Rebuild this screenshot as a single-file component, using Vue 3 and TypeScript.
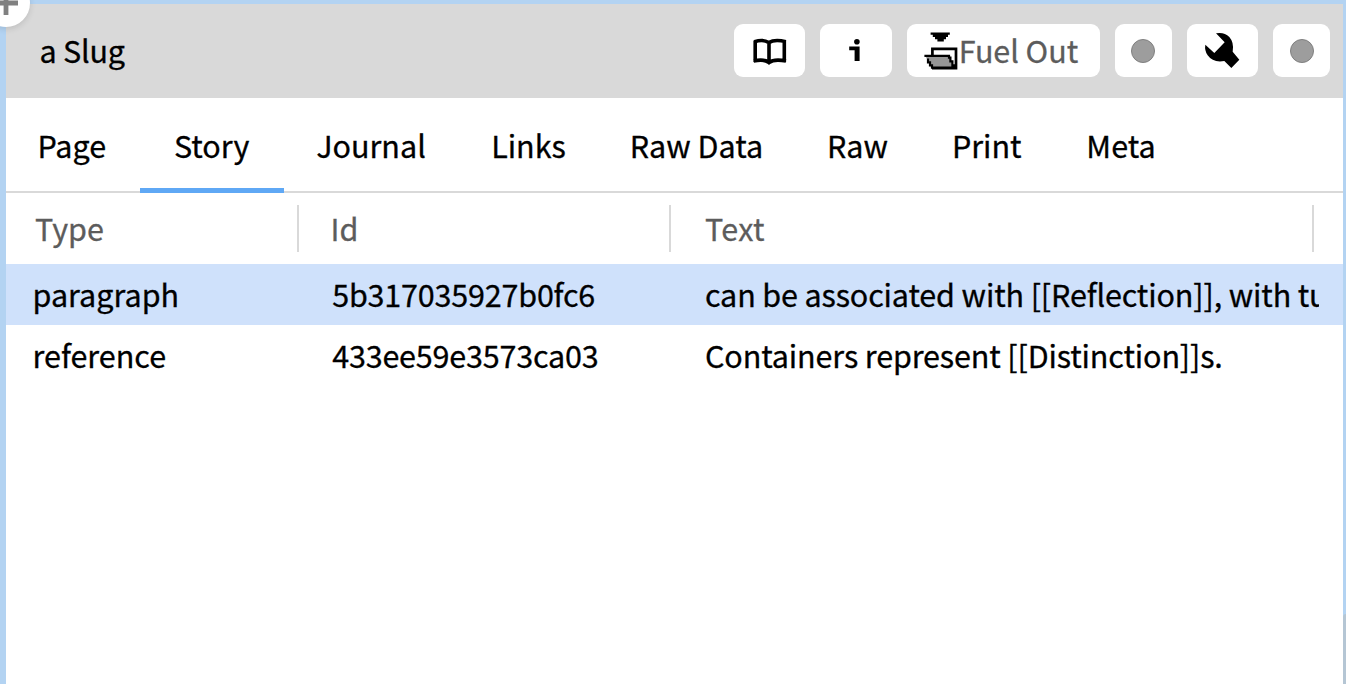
<script setup lang="ts">
interface Tab { label: string; width: number; active?: boolean }
interface Row { type: string; id: string; text: string; selected?: boolean }

const tabs: Tab[] = [
  { label: 'Page', width: 131.5 },
  { label: 'Story', width: 146, active: true },
  { label: 'Journal', width: 175 },
  { label: 'Links', width: 140 },
  { label: 'Raw Data', width: 196 },
  { label: 'Raw', width: 126 },
  { label: 'Print', width: 132.5 },
  { label: 'Meta', width: 136 },
]
const rows: Row[] = [
  { type: 'paragraph', id: '5b317035927b0fc6', text: 'can be associated with [[Reflection]], with tu', selected: true },
  { type: 'reference', id: '433ee59e3573ca03', text: 'Containers represent [[Distinction]]s.' },
]
</script>

<template>
  <div class="desktop">
    <main class="window">
      <header class="titlebar">
        <h1 class="title">a Slug</h1>
        <button class="btn wide" aria-label="Browse">
          <svg width="71" height="53" viewBox="0 -1 71 53">
            <path d="M20.6 16.8 Q29 13.8 34.7 17.6 Q41 13.8 51.8 16.8 M21.2 15.6 V37 M50.3 15.6 V37 M35 17.2 V37.6 M19.6 36 Q30 33.6 35 37.6 Q40 33.6 52 36" fill="none" stroke="#000" stroke-width="3.6" />
          </svg>
        </button>
        <button class="btn wide" aria-label="Information">
          <svg width="71" height="53" viewBox="0 -1 71 53">
            <circle cx="36.9" cy="16.8" r="2.8" /><path d="M29.2 21.6 H39.6 V36 H34.6 V25.2 H29.2 Z" />
          </svg>
        </button>
        <button class="btn fuel">
          <svg width="52" height="53" viewBox="0 -1 52 53">
            <path d="M23.6 7.6 H42.8 V9.8 H41 V12 H39 V14.2 H36.8 V16.4 H30.4 V14.2 H28 V12 H25.8 V9.8 H23.6 Z" />
            <path d="M25.4 30 V23.8 H49 V43.1 H25" fill="none" stroke="#000" stroke-width="2.7" />
            <path d="M18.4 31 H42.4 L47 42.4 H24.4 Z" fill="#969696" />
            <path d="M17.4 30.8 H42 V32.6 H43.4 V36.4 H45.4 V40.4 H47.4 V42.7 H25 V40.4 H23 V37.4 H21 V33.4" fill="none" stroke="#000" stroke-width="2.2" />
          </svg>
          <span class="label">Fuel Out</span>
        </button>
        <button class="btn small" aria-label="Status"><i class="dot"></i></button>
        <button class="btn wide" aria-label="Tools">
          <svg width="72" height="53" viewBox="246 71 216 159">
            <path d="M333 99 Q357 94 373 110 Q388 127 383 154 L403 178 L379 203 L358 182 Q324 188 308 165 Q298 150 301 133 L328 158 L359 126 Z" />
          </svg>
        </button>
        <button class="btn small" aria-label="Status"><i class="dot"></i></button>
      </header>
      <nav class="tabs">
        <div v-for="t in tabs" :key="t.label" class="tab" :class="{ active: t.active }" :style="{ width: t.width + 'px' }">
          <span>{{ t.label }}</span>
        </div>
      </nav>
      <section class="table">
        <div class="columns">
          <div class="th c1">Type</div><div class="th c2">Id</div><div class="th c3">Text</div>
        </div>
        <div v-for="r in rows" :key="r.id" class="row" :class="{ selected: r.selected }">
          <div class="td c1">{{ r.type }}</div><div class="td c2">{{ r.id }}</div><div class="td c3">{{ r.text }}</div>
        </div>
      </section>
    </main>
    <div class="edge"></div>
    <div class="add">
      <svg width="48" height="48" viewBox="0 0 48 48"><path d="M12 24 H36 M24 12 V36" stroke="#808080" stroke-width="4.8" /></svg>
    </div>
  </div>
</template>

<style>
html, body { margin: 0; overflow: hidden; }
</style>
<style scoped>
.desktop {
  position: relative; box-sizing: border-box; width: 1346px; height: 684px; padding: 3.6px 3px 0 6px;
  background: #b3d3f2; overflow: hidden; color: #000;
  font-family: "Noto Sans CJK SC", "Noto Sans", sans-serif; font-size: 30.5px; font-variant-ligatures: none;
  -webkit-text-stroke: 0.3px currentColor;
}
.window { height: 681px; background: #fff; overflow: hidden; }
.titlebar { display: flex; align-items: center; height: 94.4px; padding-right: 12.6px; background: #d9d9d9; gap: 15px; box-sizing: border-box; }
.title { flex: 1; margin: 0; padding-left: 33.5px; font-size: inherit; font-weight: 400; line-height: 90px; height: 92px; letter-spacing: -0.2px; }
.btn { display: flex; align-items: center; flex: none; height: 52.6px; border: 0; padding: 0; border-radius: 9px; background: #fff; font: inherit; color: #5c5c5c; -webkit-text-stroke: 0.3px currentColor; }
.btn svg { display: block; flex: none; }
.wide { width: 71.4px; }
.small { width: 57.2px; justify-content: center; }
.fuel { width: 193px; white-space: nowrap; }
.label { line-height: 50px; height: 52px; letter-spacing: -0.05px; }
.dot { width: 24px; height: 24px; box-sizing: border-box; border: 1.5px solid #808080; border-radius: 50%; background: #9d9d9d; }
.tabs { display: flex; height: 95px; box-sizing: border-box; border-bottom: 2px solid #d9d9d9; }
.tab { flex: none; height: 95px; box-sizing: border-box; line-height: 95px; text-align: center; white-space: nowrap; }
.active { position: relative; padding-left: 2.4px; }
.active::after { content: ""; position: absolute; left: 2.7px; right: 0; bottom: 0; height: 5px; background: #5fa8f5; }
.columns { display: flex; height: 71.4px; align-items: flex-start; box-sizing: border-box; padding-top: 12px; color: #5c5c5c; }
.th { height: 47px; line-height: 47px; box-sizing: border-box; border-right: 2px solid #d9d9d9; }
.th.c1 { width: 292.5px; padding-left: 29px; }
.th.c2 { width: 372.5px; padding-left: 32px; }
.th.c3 { width: 643px; padding-left: 34px; letter-spacing: 0.35px; }
.row { display: flex; height: 61px; line-height: 61.2px; }
.selected { background: #cfe1fb; }
.td { box-sizing: border-box; overflow: hidden; white-space: nowrap; }
.td.c1 { width: 299px; padding-left: 26.5px; }
.td.c2 { width: 373px; padding-left: 27.2px; letter-spacing: -0.19px; }
.td.c3 { width: 641px; padding-left: 27px; letter-spacing: -0.13px; }
.edge { position: absolute; right: 0; top: 614px; width: 3px; height: 70px; border-radius: 3px 0 0 0; background: #b5c6d4; }
.add { position: absolute; left: -18px; top: -21px; width: 48px; height: 48px; border-radius: 50%; background: #fff; box-shadow: 0 2px 6px rgba(0, 0, 0, 0.12); }
.add svg { display: block; }
</style>
